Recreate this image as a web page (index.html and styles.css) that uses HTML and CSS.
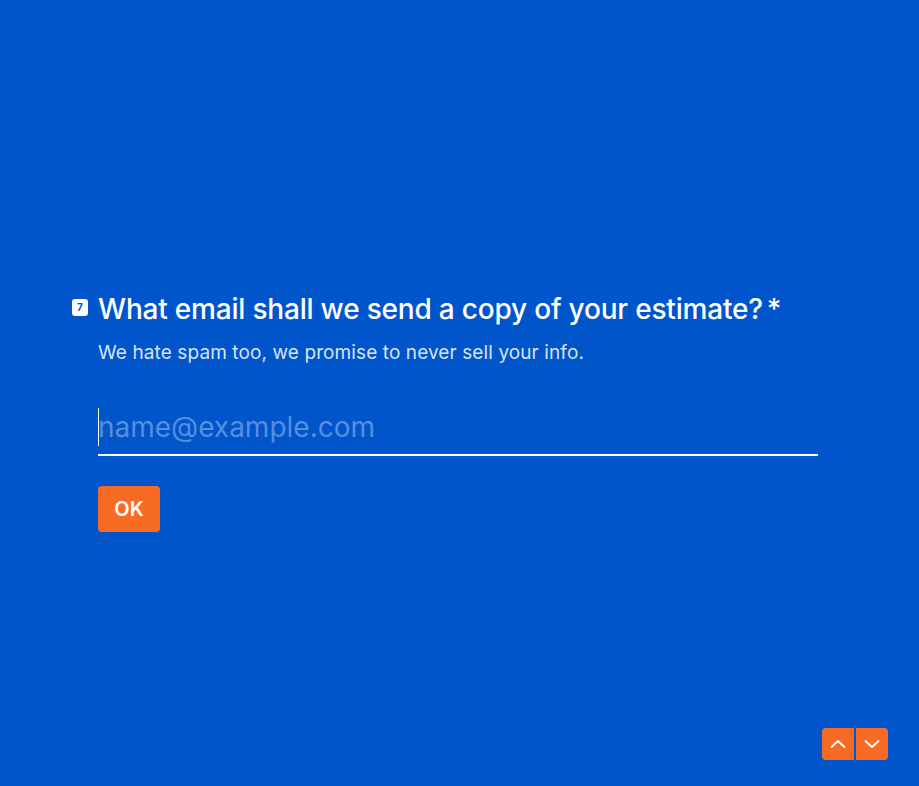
FILE: index.html
```html
<!DOCTYPE html>
<html>
<head>
<meta charset="utf-8">
<link rel="stylesheet" href="styles.css">
</head>
<body>
<main class="page">
  <section class="question">
    <div class="q-head">
      <span class="badge">7</span>
      <h1 class="title">What email shall we send a copy of your estimate?<span class="req">*</span></h1>
    </div>
    <p class="desc">We hate spam too, we promise to never sell your info.</p>
    <div class="field">
      <span class="caret"></span>
      <input class="input" type="text" placeholder="name@example.com">
    </div>
    <button class="ok">OK</button>
  </section>
</main>
<nav class="nav">
  <button class="nav-btn up" aria-label="Previous">
    <svg width="16" height="16" viewBox="0 0 16 16"><path d="M1.5 11 L8 5 L14.5 11" fill="none" stroke="#fff" stroke-width="1.8" stroke-linecap="round" stroke-linejoin="round"/></svg>
  </button>
  <button class="nav-btn down" aria-label="Next">
    <svg width="16" height="16" viewBox="0 0 16 16"><path d="M1.5 5 L8 11 L14.5 5" fill="none" stroke="#fff" stroke-width="1.8" stroke-linecap="round" stroke-linejoin="round"/></svg>
  </button>
</nav>
</body>
</html>
```
FILE: styles.css
```css
html, body {
  margin: 0;
  padding: 0;
  height: 100%;
}
body {
  background: #0055cb;
  font-family: Inter, "Noto Sans", sans-serif;
  color: #fff;
  overflow: hidden;
}
.page {
  height: 786px;
  display: flex;
  align-items: center;
  padding-left: 98px;
  box-sizing: border-box;
}
.question {
  width: 720px;
  margin-top: 36px;
}
.q-head {
  position: relative;
}
.badge {
  position: absolute;
  left: -26px;
  top: 8px;
  width: 16px;
  height: 17px;
  background: #fff;
  color: #0055cb;
  border-radius: 3px;
  font-size: 10px;
  font-weight: 700;
  display: flex;
  align-items: center;
  justify-content: center;
}
.title {
  margin: 0;
  font-size: 28px;
  font-weight: 500;
  line-height: 36px;
  letter-spacing: -0.2px;
}
.req {
  margin-left: 4px;
}
.desc {
  margin: 12px 0 0;
  font-size: 19px;
  line-height: 28px;
  letter-spacing: 0.1px;
  color: rgba(255,255,255,0.85);
}
.field {
  position: relative;
  margin-top: 34px;
  border-bottom: 2px solid #fff;
}
.caret {
  position: absolute;
  left: 0;
  top: 7px;
  width: 1px;
  height: 38px;
  background: #fff;
}
.input {
  display: block;
  width: 100%;
  box-sizing: border-box;
  background: transparent;
  border: 0;
  outline: none;
  padding: 7px 0 8px;
  font-family: inherit;
  font-size: 28px;
  line-height: 38px;
  color: #fff;
}
.input::placeholder {
  color: rgba(255,255,255,0.35);
}
.ok {
  margin-top: 30px;
  background: #f76b24;
  border: 0;
  border-radius: 4px;
  color: #fff;
  font-family: inherit;
  font-size: 20px;
  font-weight: 600;
  width: 62px;
  height: 46px;
  padding: 0;
}
.nav {
  position: fixed;
  right: 31px;
  bottom: 26px;
  display: flex;
  gap: 2px;
}
.nav-btn {
  width: 32px;
  height: 32px;
  border: 0;
  padding: 0;
  background: #f76b24;
  display: flex;
  align-items: center;
  justify-content: center;
}
.nav-btn.up { border-radius: 4px 0 0 4px; }
.nav-btn.down { border-radius: 0 4px 4px 0; }
```
